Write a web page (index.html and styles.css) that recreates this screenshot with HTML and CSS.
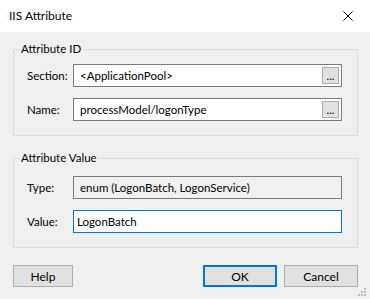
FILE: index.html
```html
<!DOCTYPE html>
<html lang="en">

<head>
    <meta charset="UTF-8">
    <title>IIS Attribute</title>
    <link rel="stylesheet" href="styles.css">
</head>

<body>
    <div class="dialog">
        <div class="titlebar">
            <span class="title">IIS Attribute</span>
            <button class="close" title="Close">
                <svg width="10" height="10" viewBox="0 0 10 10">
                    <path d="M0.5 0.5 L9.5 9.5 M9.5 0.5 L0.5 9.5" stroke="#000" stroke-width="1" fill="none"/>
                </svg>
            </button>
        </div>
        <div class="content">
            <fieldset class="group groupId">
                <legend>Attribute ID</legend>
                <div class="row">
                    <label>Section:</label>
                    <div class="field">
                        <span class="fieldText">&lt;ApplicationPool&gt;</span>
                        <button class="browse">...</button>
                    </div>
                </div>
                <div class="row">
                    <label>Name:</label>
                    <div class="field">
                        <span class="fieldText">processModel/logonType</span>
                        <button class="browse">...</button>
                    </div>
                </div>
            </fieldset>
            <fieldset class="group groupValue">
                <legend>Attribute Value</legend>
                <div class="row">
                    <label>Type:</label>
                    <div class="field readonly">
                        <span class="fieldText">enum (LogonBatch, LogonService)</span>
                    </div>
                </div>
                <div class="row">
                    <label>Value:</label>
                    <input class="field focused" type="text" value="LogonBatch">
                </div>
            </fieldset>
            <div class="buttons">
                <button class="btn">Help</button>
                <div class="spacer"></div>
                <button class="btn default">OK</button>
                <button class="btn">Cancel</button>
            </div>
            <div class="grip">
                <svg width="8" height="8" viewBox="0 0 8 8">
                    <rect x="6" y="0" width="2" height="2" fill="#bcbcbc"/>
                    <rect x="3" y="3" width="2" height="2" fill="#bcbcbc"/>
                    <rect x="6" y="3" width="2" height="2" fill="#bcbcbc"/>
                    <rect x="0" y="6" width="2" height="2" fill="#bcbcbc"/>
                    <rect x="3" y="6" width="2" height="2" fill="#bcbcbc"/>
                    <rect x="6" y="6" width="2" height="2" fill="#bcbcbc"/>
                </svg>
            </div>
        </div>
    </div>
</body>

</html>
```

FILE: styles.css
```css
* {
    box-sizing: border-box;
    padding: 0;
    margin: 0px;
}

body {
    font-family: "Segoe UI", Lato, sans-serif;
    font-size: 11.5px;
    color: #000;
    background: #f0f0f0;
}

.dialog {
    width: 370px;
    height: 299px;
    display: flex;
    flex-direction: column;
}

.titlebar {
    height: 32px;
    background: #fff;
    display: flex;
    align-items: center;
    padding-left: 9px;
}

.title {
    flex: 1;
    font-size: 12px;
    margin-top: -1px;
}

.close {
    width: 46px;
    height: 32px;
    border: none;
    background: transparent;
    display: flex;
    align-items: center;
    justify-content: center;
    margin-right: -1px;
}

.content {
    flex: 1;
    position: relative;
    padding: 9px 12px 0 13px;
}

.group {
    border: 1px solid #dcdcdc;
    padding: 7px 0 14px 13px;
}

.groupValue {
    margin-top: 14px;
    padding-top: 10px;
}

.group legend {
    margin-left: -7px;
    padding: 0 1px;
    line-height: 16px;
}

.row {
    display: flex;
    align-items: center;
    height: 23px;
}

.row + .row {
    margin-top: 11px;
}

.row label {
    width: 46px;
}

.field {
    width: 269px;
    height: 23px;
    border: 1px solid #7a7a7a;
    background: #fff;
    display: flex;
    align-items: center;
    padding: 0 2px 0 6px;
    font: inherit;
    color: #000;
}

.fieldText {
    flex: 1;
    white-space: nowrap;
    overflow: hidden;
}

.readonly {
    background: #f0f0f0;
}

.focused {
    border-color: #0078d7;
    outline: none;
    padding-left: 3px;
}

.browse {
    width: 17px;
    height: 17px;
    border: 1px solid #adadad;
    background: #e1e1e1;
    font: inherit;
    font-size: 11px;
    line-height: 12px;
}

.buttons {
    display: flex;
    margin-top: 17px;
}

.spacer {
    flex: 1;
}

.btn {
    width: 60px;
    height: 22px;
    border: 1px solid #adadad;
    background: #e1e1e1;
    font: inherit;
    font-size: 12px;
    color: #000;
}

.btn.default {
    width: 74px;
    border: 2px solid #0078d7;
    margin-right: 7px;
}

.btn + .btn {
    width: 74px;
}

.grip {
    position: absolute;
    right: 4px;
    bottom: 3px;
    line-height: 0;
}
```
